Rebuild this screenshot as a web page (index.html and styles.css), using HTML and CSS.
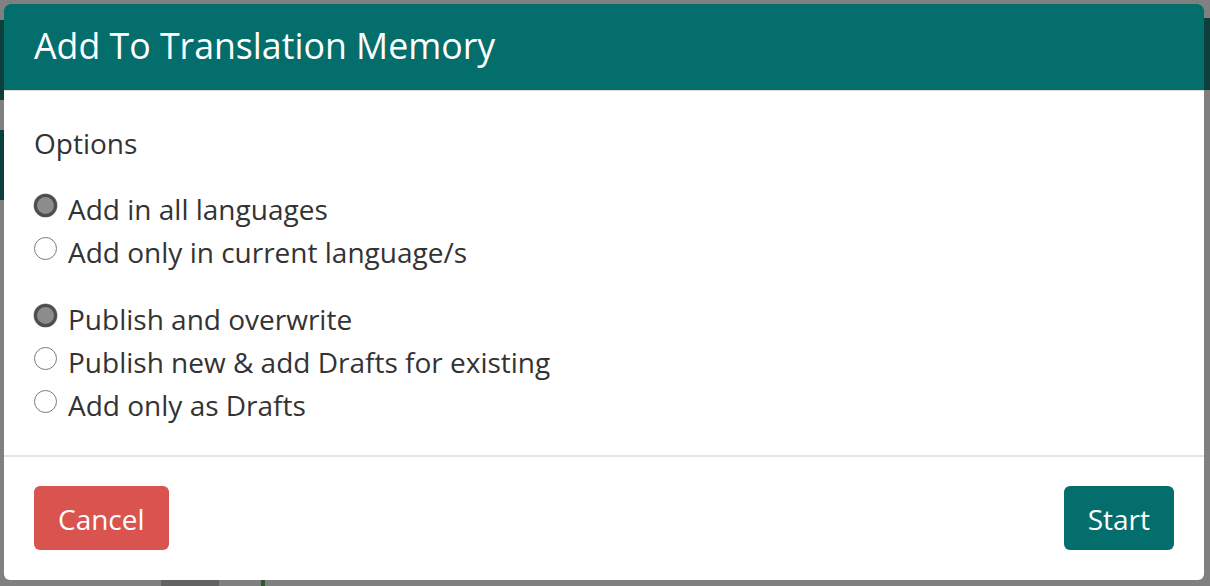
FILE: index.html
```html
<!DOCTYPE html>
<html lang="en">
<head>
<meta charset="utf-8">
<title>Add To Translation Memory</title>
<link rel="stylesheet" href="styles.css">
</head>
<body>
<div class="backdrop" aria-hidden="true">
  <div class="bd bd-left-top"></div>
  <div class="bd bd-left-mid"></div>
  <div class="bd bd-right-top"></div>
  <div class="bd bd-bottom-dark"></div>
  <div class="bd bd-bottom-green"></div>
</div>
<div class="modal">
  <header class="modal-header">
    <h1 class="modal-title">Add To Translation Memory</h1>
  </header>
  <section class="modal-body">
    <div class="section-label">Options</div>
    <div class="radio-group">
      <label class="radio-row"><input type="radio" name="lang" checked><span>Add in all languages</span></label>
      <label class="radio-row"><input type="radio" name="lang"><span>Add only in current language/s</span></label>
    </div>
    <div class="radio-group">
      <label class="radio-row"><input type="radio" name="mode" checked><span>Publish and overwrite</span></label>
      <label class="radio-row"><input type="radio" name="mode"><span>Publish new &amp; add Drafts for existing</span></label>
      <label class="radio-row"><input type="radio" name="mode"><span>Add only as Drafts</span></label>
    </div>
  </section>
  <footer class="modal-footer">
    <button class="btn btn-danger">Cancel</button>
    <button class="btn btn-primary">Start</button>
  </footer>
</div>
</body>
</html>
```
FILE: styles.css
```css
* { box-sizing: border-box; }

html, body {
  margin: 0;
  padding: 0;
}

body {
  background: #808080;
  width: 1210px;
  height: 586px;
  overflow: hidden;
  font-family: "Open Sans", "Noto Sans", sans-serif;
  color: #333;
  padding: 4px;
  position: relative;
}

.backdrop { position: absolute; inset: 0; }
.bd { position: absolute; }
.bd-left-top { left: 0; top: 20px; width: 4px; height: 80px; background: #0d3f3d; }
.bd-left-mid { left: 0; top: 130px; width: 4px; height: 70px; background: #0d3f3d; }
.bd-right-top { right: 0; top: 18px; width: 6px; height: 72px; background: #0d3f3d; }
.bd-bottom-dark { left: 161px; bottom: 0; width: 58px; height: 6px; background: #626262; }
.bd-bottom-green { left: 261px; bottom: 0; width: 4px; height: 6px; background: #2c5a2c; }

.modal {
  position: relative;
  width: 1200px;
  height: 576px;
  background: #fff;
  border-radius: 6px;
  overflow: hidden;
  display: flex;
  flex-direction: column;
}

.modal-header {
  height: 87px;
  background: #036e6c;
  border-bottom: 1px solid #dedede;
  display: flex;
  align-items: center;
  padding: 0 30px;
}

.modal-title {
  margin: 0;
  color: #fff;
  font-weight: 400;
  font-size: 35.7px;
  line-height: 1;
  position: relative;
  top: -1px;
}

.modal-body {
  height: 364px;
  padding: 34px 30px 0;
}

.section-label {
  font-size: 28px;
  line-height: 36px;
  margin-bottom: 27px;
}

.radio-group {
  display: flex;
  flex-direction: column;
  margin-bottom: 24px;
}

.radio-row {
  display: flex;
  align-items: center;
  height: 43px;
  font-size: 28px;
  line-height: 43px;
}

.radio-row input {
  appearance: none;
  -webkit-appearance: none;
  margin: 0 11px 8px 0;
  width: 23px;
  height: 23px;
  border-radius: 50%;
  border: 1.5px solid #7a7a7a;
  background: #fff;
  flex: none;
}

.radio-row input:checked {
  border: 3.5px solid #4d4d4d;
  background: #8c8c8c;
  box-shadow: 0 0 0 0.5px #9a9a9a;
}

.modal-footer {
  flex: 1;
  border-top: 2px solid #e5e5e5;
  display: flex;
  justify-content: space-between;
  align-items: center;
  padding: 0 30px 1px;
}

.btn {
  height: 64px;
  border: none;
  border-radius: 6px;
  padding: 2px 24px 0;
  font-family: "Open Sans", "Noto Sans", sans-serif;
  font-size: 28px;
  color: #fff;
}

.btn-danger { background: #d9534f; }
.btn-primary { background: #036e6c; padding: 2px 24px 0; }
```
